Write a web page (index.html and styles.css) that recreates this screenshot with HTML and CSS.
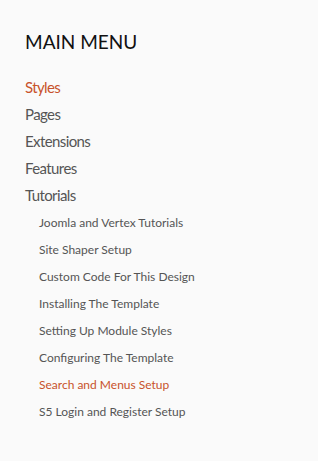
FILE: index.html
```html
<!DOCTYPE html>
<html>
<head>
    <meta charset="utf-8"/>
    <title>Main Menu</title>
    <link rel="stylesheet" href="styles.css">
</head>
<body>
<div class="module">
    <h3 class="module-title">MAIN MENU</h3>
    <ul class="menu">
        <li class="active"><a href="#">Styles</a></li>
        <li><a href="#">Pages</a></li>
        <li><a href="#">Extensions</a></li>
        <li><a href="#">Features</a></li>
        <li>
            <a href="#">Tutorials</a>
            <ul class="sub-menu">
                <li><a href="#">Joomla and Vertex Tutorials</a></li>
                <li><a href="#">Site Shaper Setup</a></li>
                <li><a href="#">Custom Code For This Design</a></li>
                <li><a href="#">Installing The Template</a></li>
                <li><a href="#">Setting Up Module Styles</a></li>
                <li><a href="#">Configuring The Template</a></li>
                <li class="active"><a href="#">Search and Menus Setup</a></li>
                <li><a href="#">S5 Login and Register Setup</a></li>
            </ul>
        </li>
    </ul>
</div>
</body>
</html>
```

FILE: styles.css
```css
html,
body {
    margin: 0;
    padding: 0;
    height: 100%;
    background: #fafafa;
    font-family: Lato, "Open Sans", sans-serif;
}

.module {
    padding: 30px 25px 0 25px;
}

.module-title {
    margin: 0 0 20px 0;
    font-size: 19px;
    font-weight: normal;
    line-height: 24px;
    color: #111;
}

.menu {
    list-style: none;
    margin: 0;
    padding: 0;
}

.menu li a {
    display: block;
    height: 27px;
    line-height: 27px;
    font-size: 15px;
    letter-spacing: -0.6px;
    color: #555;
    text-decoration: none;
}

.menu .sub-menu {
    list-style: none;
    margin: 0;
    padding: 0 0 0 14px;
}

.menu .sub-menu li a {
    font-size: 12px;
    letter-spacing: 0;
}

.menu li.active > a {
    color: #c8522b;
}
```
